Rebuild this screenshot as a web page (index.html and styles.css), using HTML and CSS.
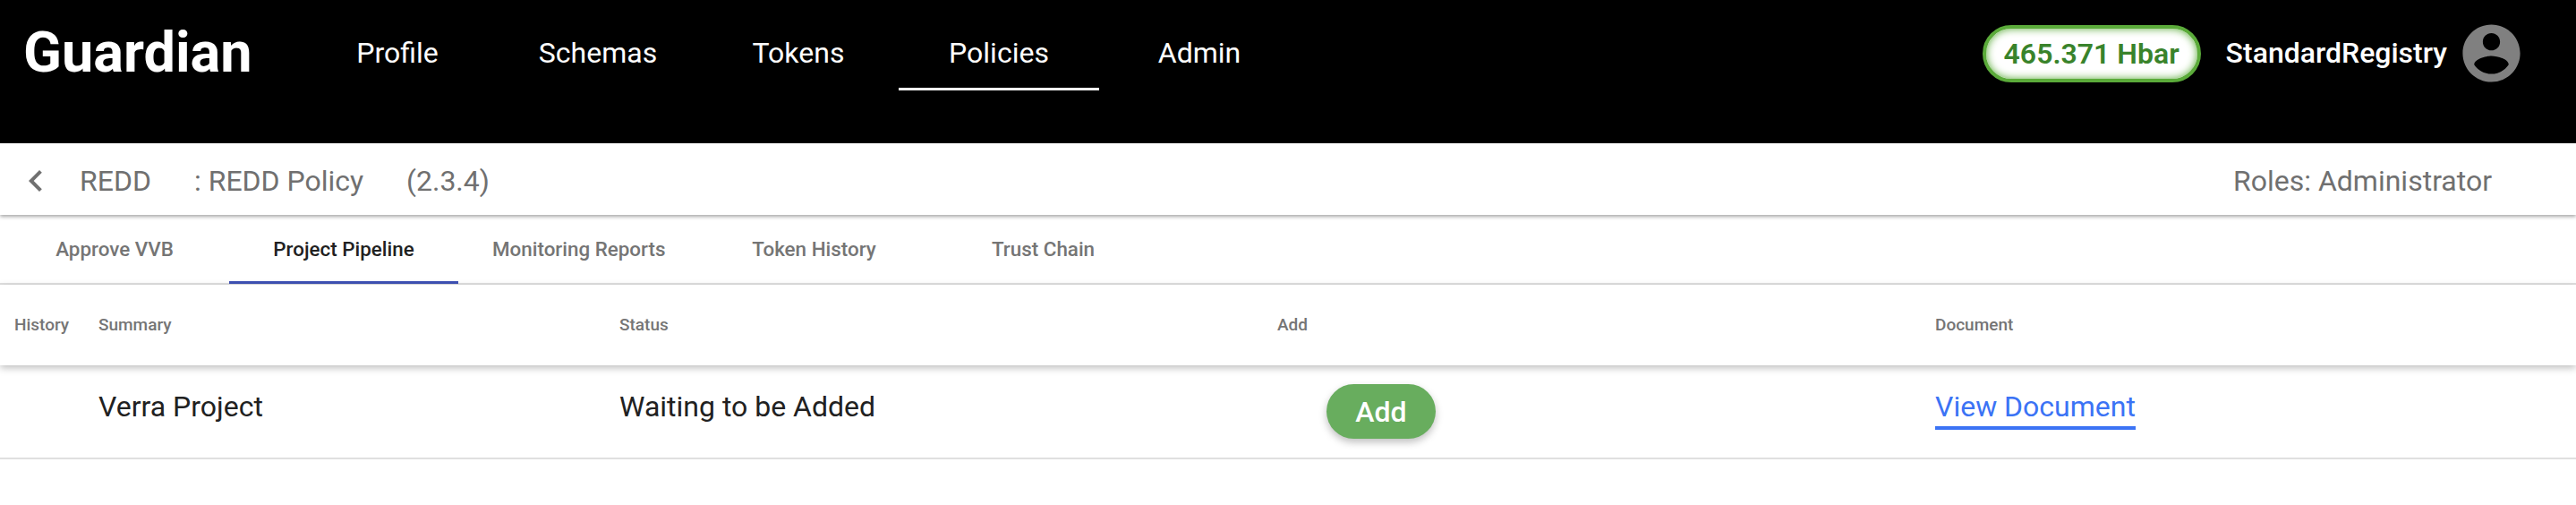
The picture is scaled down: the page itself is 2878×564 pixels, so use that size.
FILE: index.html
```html
<!DOCTYPE html>
<html lang="en">
<head>
  <meta charset="UTF-8">
  <meta name="viewport" content="width=device-width, initial-scale=1.0">
  <title>Guardian</title>
  <link rel="stylesheet" href="styles.css">
</head>
<body>
  <header class="topbar">
    <div class="logo">Guardian</div>
    <nav class="menu">
      <a class="menu-item">Profile</a>
      <a class="menu-item">Schemas</a>
      <a class="menu-item">Tokens</a>
      <a class="menu-item active">Policies</a>
      <a class="menu-item">Admin</a>
    </nav>
    <div class="balance">465.371 Hbar</div>
    <div class="username">StandardRegistry</div>
    <svg class="avatar" viewBox="0 0 24 24">
      <path fill="#808080" d="M12 2C6.48 2 2 6.48 2 12s4.48 10 10 10 10-4.48 10-10S17.52 2 12 2zm0 3c1.66 0 3 1.34 3 3s-1.34 3-3 3-3-1.34-3-3 1.34-3 3-3zm0 14.2c-2.5 0-4.71-1.28-6-3.22.03-1.99 4-3.08 6-3.08 1.99 0 5.97 1.09 6 3.08-1.29 1.94-3.5 3.22-6 3.22z"/>
    </svg>
  </header>

  <div class="policy-bar">
    <svg class="back" viewBox="0 0 24 24">
      <path fill="#707070" d="M15.41 7.41L14 6l-6 6 6 6 1.41-1.41L10.83 12z"/>
    </svg>
    <span class="policy-tag">REDD</span>
    <span class="policy-name">: REDD Policy</span>
    <span class="policy-version">(2.3.4)</span>
    <span class="roles">Roles: Administrator</span>
  </div>

  <div class="tabs">
    <div class="tab">Approve VVB</div>
    <div class="tab active">Project Pipeline</div>
    <div class="tab">Monitoring Reports</div>
    <div class="tab">Token History</div>
    <div class="tab">Trust Chain</div>
  </div>

  <div class="table-head grid-row">
    <div>History</div>
    <div>Summary</div>
    <div>Status</div>
    <div>Add</div>
    <div>Document</div>
  </div>
  <div class="table-row grid-row">
    <div></div>
    <div class="cell">Verra Project</div>
    <div class="cell">Waiting to be Added</div>
    <div><button class="add-btn">Add</button></div>
    <div class="cell"><a class="doc-link">View Document</a></div>
  </div>
</body>
</html>
```

FILE: styles.css
```css
html, body {
  margin: 0;
  height: 100%;
  background: #fff;
  font-family: Roboto, "Liberation Sans", sans-serif;
  overflow: hidden;
}
.topbar {
  display: flex;
  align-items: flex-start;
  height: 160px;
  box-sizing: border-box;
  padding: 27px 56px 0 26px;
  background: #000;
  color: #fff;
}
.logo {
  width: 306px;
  font-size: 63px;
  line-height: 64px;
  font-weight: 700;
}
.menu {
  display: flex;
  flex: 1;
}
.menu-item {
  height: 71px;
  line-height: 64px;
  width: 224px;
  font-size: 32px;
  text-align: center;
}
.menu-item.active {
  border-bottom: 3px solid #fff;
}
.balance {
  width: 244px;
  height: 64px;
  margin-top: 1px;
  box-sizing: border-box;
  border: 4px solid #5bab3a;
  border-radius: 32px;
  background: #fff;
  box-shadow: inset 0 0 10px #5bab3a;
  color: #39832b;
  font-size: 32px;
  font-weight: 600;
  line-height: 56px;
  text-align: center;
}
.username {
  margin-left: 28px;
  font-size: 32px;
  font-weight: 500;
  line-height: 64px;
}
.avatar {
  width: 77px;
  height: 77px;
  margin: -6px 0 0 11px;
}
.policy-bar {
  position: relative;
  display: flex;
  align-items: center;
  height: 80px;
  box-sizing: border-box;
  padding: 3px 94px 0 16px;
  background: #fff;
  box-shadow: 0 2px 4px rgba(0, 0, 0, 0.35);
  color: #707070;
  font-size: 32px;
}
.back {
  width: 48px;
  height: 48px;
  margin-right: 25px;
}
.policy-tag {
  width: 128px;
}
.policy-name {
  width: 237px;
}
.roles {
  margin-left: auto;
}
.tabs {
  display: flex;
  height: 78px;
  box-sizing: border-box;
  border-bottom: 2px solid #e0e0e0;
}
.tab {
  min-width: 256px;
  box-sizing: border-box;
  padding: 0 38px;
  height: 77px;
  line-height: 76px;
  text-align: center;
  color: #757575;
  font-size: 22.4px;
  font-weight: 500;
}
.tab.active {
  color: #212121;
  border-bottom: 3px solid #3f51b5;
}
.grid-row {
  display: grid;
  grid-template-columns: 94px 582px 735px 735px 1fr;
  padding-left: 16px;
  box-sizing: border-box;
}
.table-head {
  position: relative;
  height: 90px;
  padding-bottom: 2px;
  align-items: center;
  background: #fff;
  box-shadow: 0 3px 8px rgba(0, 0, 0, 0.25);
  color: #757575;
  font-size: 19px;
  font-weight: 500;
}
.table-row {
  height: 105px;
  align-items: center;
  border-bottom: 2px solid #e0e0e0;
  color: #212121;
  font-size: 32px;
}
.cell {
  padding-bottom: 12px;
}
.add-btn {
  display: block;
  width: 122px;
  height: 61px;
  margin-left: 55px;
  padding: 0;
  border: none;
  border-radius: 31px;
  background: #68ad5e;
  box-shadow: 0 4px 8px rgba(0, 0, 0, 0.25);
  color: #fff;
  font-family: inherit;
  font-size: 32px;
  font-weight: 500;
}
.doc-link {
  color: #3b73f5;
  border-bottom: 4px solid #3b73f5;
  padding-bottom: 3px;
}
```
